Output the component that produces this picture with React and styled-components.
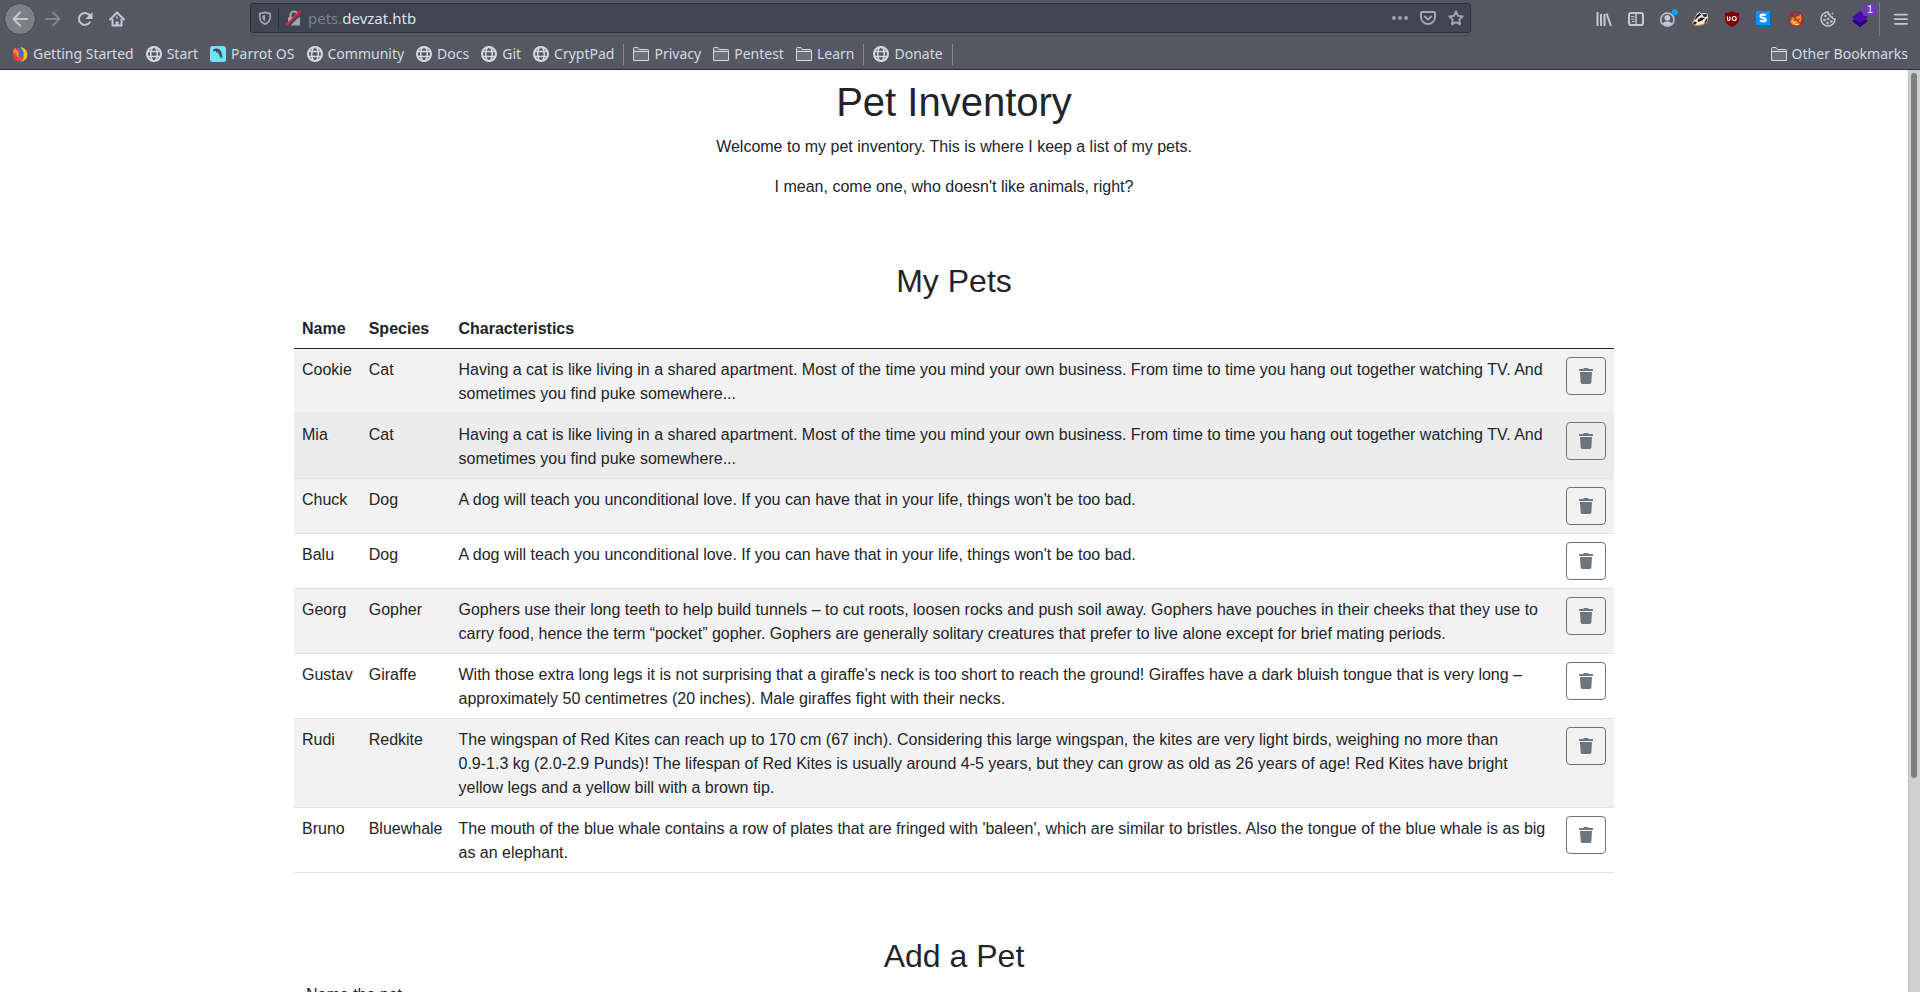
import React from "react";
import styled, { createGlobalStyle } from "styled-components";
import { FaTrash } from "react-icons/fa";

const GlobalStyle = createGlobalStyle`
  *, *::before, *::after { box-sizing: border-box; }
  body { margin: 0; background: #fff; }
`;

const Window = styled.div`
  display: flex;
  flex-direction: column;
  height: 100vh;
  overflow: hidden;
`;

/* ---------- browser chrome ---------- */

const Chrome = styled.header`
  flex: none;
  background: #555862;
  color: #d3dae3;
  border-bottom: 1px solid #2b2e39;
  font-family: "Noto Sans", sans-serif;
`;

const NavBar = styled.nav`
  display: flex;
  align-items: center;
  height: 37px;
  padding: 0 3px 0 4px;
`;

const ToolButton = styled.button`
  position: relative;
  display: flex;
  flex: none;
  align-items: center;
  justify-content: center;
  width: 32px;
  height: 32px;
  padding: 0;
  border: 0;
  background: none;
  color: #c4c8d4;
  opacity: ${(p) => (p.$dim ? 0.4 : 1)};
`;

const BackButton = styled(ToolButton)`
  margin-right: 1px;
  border: 1px solid #41444e;
  border-radius: 50%;
  background: #7c8082;
`;

const Spacer = styled.div`
  flex: 0 1 117px;
`;

const UrlBox = styled.div`
  flex: 1;
  height: 34px;
  padding-top: 1px;
  border-bottom: 1px dotted #454852;
`;

const UrlBar = styled.div`
  display: flex;
  align-items: center;
  height: 30px;
  padding-left: 6px;
  border: 1px solid #2b2e39;
  border-radius: 3px;
  background: #404552;
  color: #a0a4af;
`;

const UrlButton = styled.button`
  display: flex;
  flex: none;
  align-items: center;
  justify-content: center;
  width: ${(p) => p.$width || 28}px;
  height: 28px;
  padding: 0;
  border: 0;
  background: none;
  color: inherit;
`;

const UrlDivider = styled.span`
  width: 1px;
  height: 22px;
  margin: 0 5px;
  background: #2b2e39;
`;

const Address = styled.a`
  flex: 1;
  margin-left: 4px;
  color: #7b808c;
  font-size: 15px;
  line-height: 20px;
  text-decoration: none;
`;

const Domain = styled.span`
  color: #dde2ea;
`;

const Badge = styled.span`
  position: absolute;
  top: 1px;
  right: -1px;
  width: 14px;
  height: 12px;
  border-radius: 2px;
  background: #6f3bb8;
  color: #fff;
  font-size: 10px;
  line-height: 12px;
  text-align: center;
`;

const MenuDivider = styled.span`
  width: 1px;
  height: 34px;
  margin: 0 5px 0 3px;
  background: #777a84;
`;

const BookmarkBar = styled.nav`
  display: flex;
  align-items: center;
  gap: 12px;
  height: 32px;
  padding: 2px 12px 0;
`;

const Bookmark = styled.a`
  display: flex;
  flex: none;
  align-items: center;
  gap: 5px;
  color: #d3dae3;
  font-size: 14px;
  line-height: 20px;
  text-decoration: none;
  white-space: nowrap;
  margin-left: ${(p) => (p.$end ? "auto" : "0")};
`;

const BookmarkDivider = styled.span`
  width: 1px;
  height: 21px;
  margin: 0 -3px;
  background: #858893;
`;

/* ---------- page ---------- */

const Viewport = styled.div`
  display: flex;
  flex: 1;
  min-height: 0;
`;

const Page = styled.main`
  flex: 1;
  min-width: 0;
  overflow-y: auto;
  scrollbar-width: none;
  padding: 8px 0;
  color: #212529;
  font-family: "Liberation Sans", Arial, sans-serif;
  font-size: 16px;
  line-height: 24px;
`;

const ScrollTrack = styled.div`
  flex: none;
  width: 12px;
  padding: 3px 2px;
  border-left: 1px solid #bcbebe;
  background: #cfd0d0;
`;

const ScrollThumb = styled.div`
  width: 6px;
  height: 77%;
  border-radius: 3px;
  background: #7c8082;
`;

const Container = styled.section`
  max-width: 1320px;
  margin: 0 auto;
  padding-bottom: ${(p) => p.$bottom || 48}px;
`;

const Title = styled.h1`
  margin: 0 0 9px;
  font-size: 40px;
  font-weight: 400;
  line-height: 48px;
  text-align: center;
`;

const Heading = styled.h2`
  margin: 0 0 8px;
  font-size: 32px;
  font-weight: 400;
  line-height: 38px;
  text-align: center;
`;

const Lead = styled.p`
  margin: 0 0 16px;
  text-align: center;
`;

const TableWrap = styled.div`
  padding-bottom: 16px;
`;

const PetTable = styled.table`
  width: 100%;
  border-collapse: collapse;
`;

const HeadCell = styled.th`
  padding: 9px 8px 7px;
  border-bottom: 1px solid #212529;
  text-align: left;
`;

const Row = styled.tr`
  background: ${(p) => (p.$active ? "#ececec" : "transparent")};
  &:nth-child(odd) {
    background: #f2f2f2;
  }
`;

const Cell = styled.td`
  padding: 9px 8px 7px;
  border-bottom: 1px solid #dee2e6;
  vertical-align: top;
`;

const ActionCell = styled(Cell)`
  padding: 8px;
`;

const NoBreak = styled.span`
  white-space: nowrap;
`;

const DeleteButton = styled.button`
  display: flex;
  align-items: center;
  justify-content: center;
  width: 40px;
  height: 38px;
  padding: 0;
  border: 1px solid #6c757d;
  border-radius: 4px;
  background: transparent;
  color: #6c757d;
`;

const Field = styled.div`
  padding: 0 12px;
`;

const FieldLabel = styled.label`
  display: block;
  margin-bottom: 8px;
`;

const FieldInput = styled.input`
  width: 100%;
  height: 38px;
  padding: 6px 12px;
  border: 1px solid #ced4da;
  border-radius: 4px;
  font: inherit;
`;

/* ---------- icons ---------- */

const Icon = ({ size = 16, children }) => (
  <svg width={size} height={size} viewBox="0 0 16 16" fill="none" stroke="currentColor" strokeWidth="2" aria-hidden="true">
    {children}
  </svg>
);

const ArrowLeft = () => (
  <Icon><path d="M15 8H1.5M8 1.5 1.5 8 8 14.5" strokeLinecap="round" strokeLinejoin="round" /></Icon>
);
const ArrowRight = () => (
  <Icon><path d="M1 8h13.5M8 1.5 14.500 8 8 14.500" strokeLinecap="round" strokeLinejoin="round" /></Icon>
);
const Reload = () => (
  <Icon>
    <path d="M12.900 11.300A6 6 0 1 1 12.500 4" strokeLinecap="round" />
    <path d="M15.500 1v7H8.500z" fill="currentColor" stroke="none" />
  </Icon>
);
const Home = () => (
  <Icon>
    <path d="M1 8.500 8 1.500l7 7" strokeLinecap="round" strokeLinejoin="round" />
    <path d="M3.500 8v6.500h9V8" strokeLinejoin="round" />
    <path d="M6.500 15v-4.500h3V15z" fill="currentColor" stroke="none" />
    <path d="M8 5.500v2" strokeWidth="1.500" />
  </Icon>
);
const Shield = () => (
  <Icon size={14}>
    <path d="M8 1.500 14 3v3.500c0 4.500-2.500 7-6 8.500-3.500-1.500-6-4-6-8.500V3z" strokeLinejoin="round" />
    <path d="M8 4.500 5 5.200v1.500c0 2.500 1 4 3 5.300z" fill="currentColor" stroke="none" />
  </Icon>
);
const BrokenLock = () => (
  <Icon>
    <path d="M4.500 8V5a3.500 3.500 0 0 1 7 0v3" />
    <rect x="2" y="7" width="12" height="8.500" rx="1" fill="currentColor" stroke="none" />
    <path d="M1.500 16 15.500 2" stroke="#404552" strokeWidth="3.500" />
    <path d="M1 14.500 14 1.500" stroke="#ff1a3c" strokeLinecap="round" />
  </Icon>
);
const Dots = () => (
  <Icon>
    <g fill="currentColor" stroke="none"><circle cx="2" cy="8" r="2" /><circle cx="8" cy="8" r="2" /><circle cx="14" cy="8" r="2" /></g>
  </Icon>
);
const Pocket = () => (
  <Icon>
    <path d="M2 2h12a1 1 0 0 1 1 1v4.500a7 6.500 0 0 1-14 0V3a1 1 0 0 1 1-1z" />
    <path d="m4.800 6.500 3.200 3 3.200-3" strokeLinecap="round" strokeLinejoin="round" />
  </Icon>
);
const Star = () => (
  <Icon><path d="m8 1.500 2 4.300 4.700.6-3.400 3.300.8 4.700L8 12.200l-4.100 2.200.8-4.700L1.300 6.400 6 5.800z" strokeLinejoin="round" /></Icon>
);
const Library = () => (
  <Icon><path d="M1.500 1v14M5 3v12M8.500 3v12" /><path d="m10.500 2.500 4.500 12.500" /></Icon>
);
const Sidebar = () => (
  <Icon>
    <rect x="1" y="2" width="14" height="12" rx="2" />
    <path d="M8 2v12" strokeWidth="1.500" />
    <path d="M3 5.500h3.500M3 8h3.500M4 10.500h2.500" strokeWidth="1" />
  </Icon>
);
const Account = () => (
  <Icon size={20}>
    <circle cx="7.500" cy="8.500" r="5.300" strokeWidth="1.200" />
    <circle cx="7.500" cy="7" r="2.300" fill="currentColor" stroke="none" />
    <path d="M3.800 11.500c1-2 6.400-2 7.400 0-1.700 2.200-5.700 2.200-7.400 0z" fill="currentColor" stroke="none" />
    <circle cx="13.500" cy="2.500" r="2.500" fill="#18a0f0" stroke="none" />
  </Icon>
);
const Badger = () => (
  <Icon>
    <path d="M0 12.500 3 6 5 2.500 7.500 1l2 1.500L13 2l2.500 1L16 7l-1 5-4 2-7 1z" fill="#f3e6d6" stroke="none" />
    <path d="M4 5 7.500 2l2 1.500L6 6 2.500 9.500zM10 3.500 14.500 3l.5 2.500L12 6zM5.500 9 9 6.500l4 .5-3 2.500-3.500 1.500z" fill="#1d1b1c" stroke="none" />
    <path d="M.5 12 3 10.500l2 1L3 14zM14 8l1.500-1-1 5-3 2z" fill="#2a2524" stroke="none" />
    <path d="M0 12.500 4 5M4 14.800l7-1.300 4-2.500" stroke="#c07a45" strokeWidth="1" />
  </Icon>
);
const UBlock = () => (
  <Icon>
    <path d="M8 0c2 1.500 4 2 7 2v6c0 4-3 6-7 8-4-2-7-4-7-8V2c3 0 5-.5 7-2z" fill="#800000" stroke="none" />
    <path d="M3.500 5.500v2.700q0 1.300 1.200 1.300t1.200-1.300V5.500" stroke="#fff" strokeWidth="1.200" />
    <circle cx="10.200" cy="7.500" r="2" stroke="#fff" strokeWidth="1.200" />
  </Icon>
);
const Stylus = () => (
  <Icon>
    <path d="M0 0h14l2 2v14H2l-2-2z" fill="#0767b8" stroke="none" />
    <path d="M0 0h14v14H0z" fill="#0a93fa" stroke="none" />
    <path d="M9.800 4.500C8.500 3.200 4.500 3.200 4.500 5.300c0 2.400 5.200 1 5.200 3.400 0 2.100-4 2-5.500.6" stroke="#fff" strokeWidth="2.200" />
  </Icon>
);
const FoxBlock = () => (
  <Icon>
    <path d="M4.500 6 6 6.500 11 5l2-2.500.5 5-1 3.500L13 14l-4.500 1-4-1L2 11z" fill="#f58a2c" stroke="none" />
    <path d="m4.500 10 2.500 1-1 2.500zM12.500 9 10 10.500l1 2zM7 13l2 1.500L10.500 13z" fill="#f7dcc0" stroke="none" />
    <path d="m6 8.500 1.500 1M10.500 9l1.500-1" stroke="#5b2b10" strokeWidth="1" />
    <circle cx="8" cy="8" r="7.300" stroke="#c5161d" strokeWidth="1.200" />
    <path d="m3 3 10 10" stroke="#c5161d" strokeWidth="1.300" />
  </Icon>
);
const Cookie = () => (
  <Icon>
    <path d="M8 1a7 7 0 1 0 7 7c-1.500.3-2.600-.4-2.800-1.900C10.500 6.300 9.700 5.300 10 3.700 8.500 3.500 7.800 2.500 8 1z" strokeWidth="1.500" strokeLinejoin="round" />
    <g fill="currentColor" stroke="none">
      <circle cx="5.500" cy="5" r="1.200" /><circle cx="4.500" cy="9" r="1.300" /><circle cx="8.200" cy="8" r="1.200" />
      <circle cx="7.500" cy="12" r="1.200" /><circle cx="11.300" cy="10.500" r="1.300" /><circle cx="12.500" cy="2.500" r=".9" />
    </g>
  </Icon>
);
const Layers = () => (
  <Icon>
    <path d="m8 16-8-6 8-5 8 5z" fill="#230078" stroke="none" />
    <path d="M8 12.500 0 6.500 8 0l8 6.500z" fill="#4a08b0" stroke="none" />
  </Icon>
);
const Menu = () => (
  <Icon size={14}><path d="M1 3h14M1 8h14M1 13.500h14" strokeLinecap="round" /></Icon>
);
const Globe = () => (
  <Icon>
    <circle cx="8" cy="8" r="7" />
    <ellipse cx="8" cy="8" rx="3.300" ry="7" strokeWidth="1.500" />
    <path d="M1.500 5.500h13M1.500 10.500h13" strokeWidth="1.500" />
  </Icon>
);
const Folder = () => (
  <Icon>
    <path d="M.5 14V2.500a1 1 0 0 1 1-1H5l1.500 2H14.500a1 1 0 0 1 1 1V14.500H.5z" fill="#6b707b" strokeWidth="1" />
    <path d="M.5 5.500h15" strokeWidth="1" />
  </Icon>
);
const Firefox = () => (
  <Icon>
    <circle cx="8" cy="8.500" r="7" fill="#ff3b3b" stroke="none" />
    <path d="M9 1c4 1 6.500 4 6.300 8-.3 4-3.300 6.500-7.300 6.500 3-1 4-3 3.500-5.500z" fill="#ffc21a" stroke="none" />
    <path d="M1 7C1 4.500 2 2.500 3.500 1.500L4 4l3 1-1 3z" fill="#ff8a1a" stroke="none" />
    <path d="M5.500 3C8 .8 11.500 3.500 11.800 7c.2 3-2 4.500-4 4.500L5.500 9.500 8 8 7.500 6z" fill="#1878e0" stroke="none" />
    <path d="M4.300 6.500 7 8.300 6 10.500l3 .5c-1.500 1.500-5.200.3-4.700-4.500z" fill="#ff9020" stroke="none" />
  </Icon>
);
const Parrot = () => (
  <Icon>
    <rect width="16" height="16" rx="2.500" fill="#6fe3f7" stroke="none" />
    <path d="M3 4C4.500 2 8 2 10 4c2.200 2.300 1.500 5 2.800 8.500-1-.5-1.500-1.200-2-2.200L10.500 13C9.500 10 9.300 7.500 6.800 5.800L6.500 7 5.200 4.800 3.500 5.500z" fill="#3b5560" stroke="none" />
  </Icon>
);

/* ---------- data ---------- */

const bookmarks = [
  ["Getting Started", Firefox], ["Start", Globe], ["Parrot OS", Parrot], ["Community", Globe],
  ["Docs", Globe], ["Git", Globe], ["CryptPad", Globe], null,
  ["Privacy", Folder], ["Pentest", Folder], ["Learn", Folder], null,
  ["Donate", Globe], null,
];

const extensions = [
  ["Library", Library], ["Sidebars", Sidebar], ["Account", Account], ["Privacy Badger", Badger],
  ["uBlock", UBlock], ["Styles", Stylus], ["Fox blocker", FoxBlock], ["Cookies", Cookie],
];

const catText = "Having a cat is like living in a shared apartment. Most of the time you mind your own business. From time to time you hang out together watching TV. And sometimes you find puke somewhere...";
const dogText = "A dog will teach you unconditional love. If you can have that in your life, things won't be too bad.";

const pets = [
  ["Cookie", "Cat", catText],
  ["Mia", "Cat", catText],
  ["Chuck", "Dog", dogText],
  ["Balu", "Dog", dogText],
  ["Georg", "Gopher", "Gophers use their long teeth to help build tunnels – to cut roots, loosen rocks and push soil away. Gophers have pouches in their cheeks that they use to carry food, hence the term “pocket” gopher. Gophers are generally solitary creatures that prefer to live alone except for brief mating periods."],
  ["Gustav", "Giraffe", "With those extra long legs it is not surprising that a giraffe's neck is too short to reach the ground! Giraffes have a dark bluish tongue that is very long – approximately 50 centimetres (20 inches). Male giraffes fight with their necks."],
  ["Rudi", "Redkite", (
    <>
      The wingspan of Red Kites can reach up to 170 cm (67 inch). Considering this large wingspan, the kites are very light birds, weighing no more than <NoBreak>0.9-1.3</NoBreak> kg (2.0-2.9 Punds)! The lifespan of Red Kites is usually around 4-5 years, but they can grow as old as 26 years of age! Red Kites have bright yellow legs and a yellow bill with a brown tip.
    </>
  )],
  ["Bruno", "Bluewhale", "The mouth of the blue whale contains a row of plates that are fringed with 'baleen', which are similar to bristles. Also the tongue of the blue whale is as big as an elephant."],
];

function BrowserChrome() {
  return (
    <Chrome>
      <NavBar>
        <BackButton aria-label="Back"><ArrowLeft /></BackButton>
        <ToolButton aria-label="Forward" $dim><ArrowRight /></ToolButton>
        <ToolButton aria-label="Reload"><Reload /></ToolButton>
        <ToolButton aria-label="Home"><Home /></ToolButton>
        <Spacer />
        <UrlBox>
          <UrlBar>
            <UrlButton aria-label="Tracking protection" $width={16}><Shield /></UrlButton>
            <UrlDivider />
            <UrlButton aria-label="Connection security" $width={20}><BrokenLock /></UrlButton>
            <Address href="#">pets.<Domain>devzat.htb</Domain></Address>
            <UrlButton aria-label="Page actions"><Dots /></UrlButton>
            <UrlButton aria-label="Save to Pocket"><Pocket /></UrlButton>
            <UrlButton aria-label="Bookmark this page"><Star /></UrlButton>
          </UrlBar>
        </UrlBox>
        <Spacer />
        {extensions.map(([label, Glyph]) => (
          <ToolButton key={label} aria-label={label}><Glyph /></ToolButton>
        ))}
        <ToolButton aria-label="Containers"><Layers /><Badge>1</Badge></ToolButton>
        <MenuDivider />
        <ToolButton aria-label="Menu"><Menu /></ToolButton>
      </NavBar>
      <BookmarkBar>
        {bookmarks.map((item, i) => {
          if (!item) return <BookmarkDivider key={i} />;
          const [label, Glyph] = item;
          return <Bookmark key={label} href="#"><Glyph />{label}</Bookmark>;
        })}
        <Bookmark href="#" $end><Folder />Other Bookmarks</Bookmark>
      </BookmarkBar>
    </Chrome>
  );
}

export default function App() {
  return (
    <Window>
      <GlobalStyle />
      <BrowserChrome />
      <Viewport>
        <Page>
          <Container $bottom={47}>
            <Title>Pet Inventory</Title>
            <Lead>Welcome to my pet inventory. This is where I keep a list of my pets.</Lead>
            <Lead>I mean, come one, who doesn't like animals, right?</Lead>
          </Container>
          <Container>
            <Heading>My Pets</Heading>
            <TableWrap>
              <PetTable>
                <thead>
                  <tr>
                    <HeadCell>Name</HeadCell>
                    <HeadCell>Species</HeadCell>
                    <HeadCell>Characteristics</HeadCell>
                    <HeadCell aria-label="Actions" />
                  </tr>
                </thead>
                <tbody>
                  {pets.map(([name, species, text]) => (
                    <Row key={name} $active={name === "Mia"}>
                      <Cell>{name}</Cell>
                      <Cell>{species}</Cell>
                      <Cell>{text}</Cell>
                      <ActionCell>
                        <DeleteButton aria-label={`Delete ${name}`}><FaTrash size={16} /></DeleteButton>
                      </ActionCell>
                    </Row>
                  ))}
                </tbody>
              </PetTable>
            </TableWrap>
          </Container>
          <Container>
            <Heading>Add a Pet</Heading>
            <Field>
              <FieldLabel htmlFor="pet-name">Name the pet</FieldLabel>
              <FieldInput id="pet-name" type="text" />
            </Field>
          </Container>
        </Page>
        <ScrollTrack><ScrollThumb /></ScrollTrack>
      </Viewport>
    </Window>
  );
}
